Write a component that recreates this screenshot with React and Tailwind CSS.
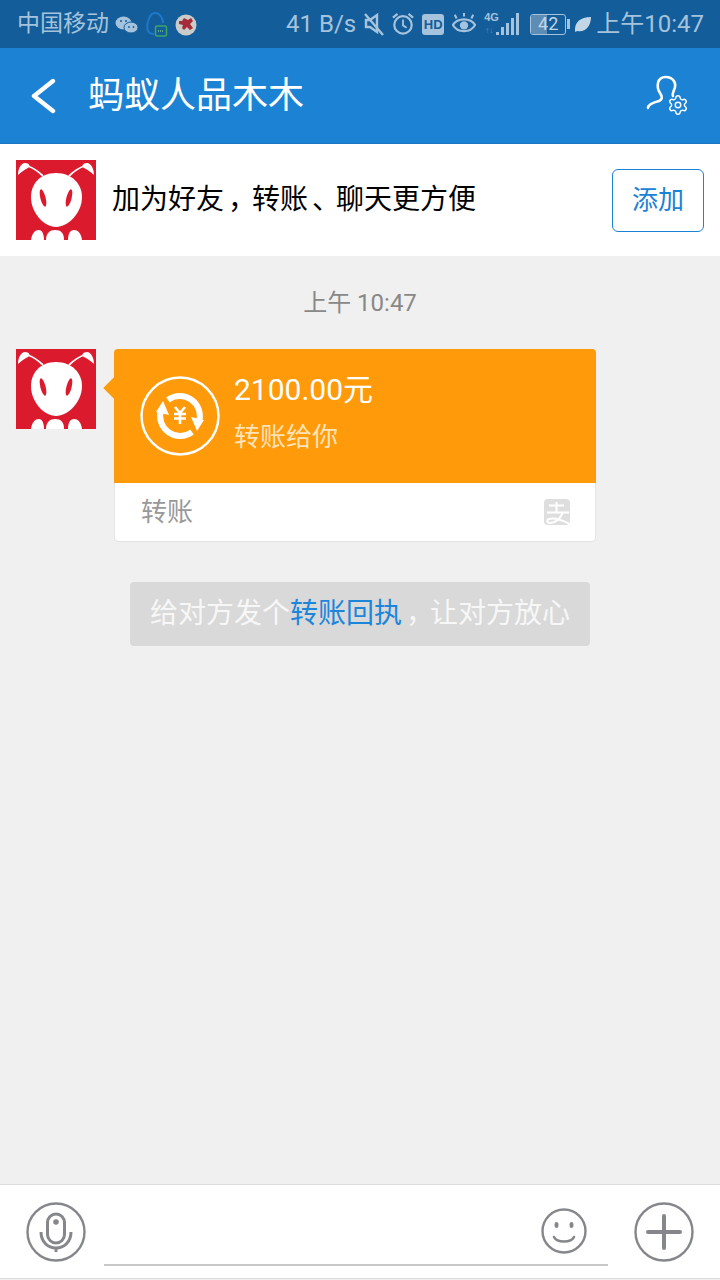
import { Settings } from "lucide-react";

const cjk = "font-['Roboto','Noto_Sans_CJK_SC',sans-serif]";

// the screenshot's font sets its punctuation a little further right in the em box
function Punct({ children }) {
    return <span className="inline-block ml-[4px] tracking-[-4px]">{children}</span>;
}

function AntAvatar() {
    return (
        <svg width="80" height="80" viewBox="0 0 80 80" className="shrink-0 block">
            <rect width="80" height="80" fill="#dc1a2e" />
            <path d="M27 16 C22 11 17 8 12 6" stroke="#fff" strokeWidth="1.8" fill="none" />
            <path d="M53 16 C58 11 63 8 68 6" stroke="#fff" strokeWidth="1.8" fill="none" />
            <path d="M2 15 C2 9 5 3 9 3 C13 3 15 6 12 8 C8 10 5 12 2 15 Z" fill="#fff" />
            <path d="M78 15 C78 9 75 3 71 3 C67 3 65 6 68 8 C72 10 75 12 78 15 Z" fill="#fff" />
            <path d="M40 13 C56 13 66 24 66 37 C66 53 52 67 40 67 C28 67 15 53 15 37 C15 24 24 13 40 13 Z" fill="#fff" />
            <ellipse cx="27" cy="38" rx="2.6" ry="9" fill="#dc1a2e" transform="rotate(-14 27 38)" />
            <ellipse cx="53" cy="38" rx="2.6" ry="9" fill="#dc1a2e" transform="rotate(14 53 38)" />
            <path d="M15 80 C16 73 19 70 23 70 C26 70 28 74 28 80 Z" fill="#fff" />
            <path d="M30 80 C30 73 34 70 39 70 C45 70 48 73 48 80 Z" fill="#fff" />
            <path d="M52 80 C52 74 54 70 58 70 C62 70 65 73 66 80 Z" fill="#fff" />
        </svg>
    );
}

function StatusLeftIcons() {
    return (
        <div className="flex items-center ml-[6px] mt-[1px]">
            {/* wechat */}
            <svg width="23" height="20" viewBox="0 0 23 20">
                <ellipse cx="8.5" cy="8" rx="8" ry="6.5" fill="#a5c3dc" />
                <ellipse cx="16" cy="12.5" rx="7" ry="5.5" fill="#a5c3dc" stroke="#135d9a" strokeWidth="1" />
                <circle cx="6" cy="6" r="1" fill="#135d9a" />
                <circle cx="11" cy="6" r="1" fill="#135d9a" />
                <circle cx="14" cy="12" r="0.9" fill="#135d9a" />
                <circle cx="18.5" cy="12" r="0.9" fill="#135d9a" />
            </svg>
            {/* qq message */}
            <svg width="22" height="28" viewBox="0 0 22 28" className="ml-[8px]">
                <path d="M2 20 C0 14 3 2 9 2 C15 2 17 9 17 12" stroke="#1e78c8" strokeWidth="2" fill="none" />
                <path d="M2 20 C3 22 5 23 8 23" stroke="#1e78c8" strokeWidth="2" fill="none" />
                <rect x="9.5" y="15" width="11" height="10" rx="1.5" fill="#135d9a" stroke="#3fa36a" strokeWidth="1.5" />
                <path d="M12 20h6" stroke="#6fc08e" strokeWidth="1.5" strokeDasharray="1 1" />
            </svg>
            {/* app badge */}
            <svg width="22" height="22" viewBox="0 0 22 22" className="ml-[7px]">
                <circle cx="11" cy="11" r="10.5" fill="#c9ccc8" />
                <path d="M4 7h3l2-3 4 2 3-2 2 3-3 3 3 4-3 2-3-3-3 3-2-2 1-3-4-1z" fill="#a52c3a" />
            </svg>
        </div>
    );
}

function StatusRightIcons() {
    const c = "#a5c3dc";
    return (
        <div className="flex items-center">
            {/* muted */}
            <svg width="20" height="26" viewBox="0 0 20 26" className="mr-[8px]">
                <path d="M2 9h4l7-5v17l-7-5H2z" fill="none" stroke={c} strokeWidth="2.4" />
                <path d="M1 3l18 21" stroke={c} strokeWidth="2.4" />
            </svg>
            {/* alarm */}
            <svg width="22" height="26" viewBox="0 0 24 26" className="mr-[8px]">
                <circle cx="12" cy="14" r="9.5" fill="none" stroke={c} strokeWidth="2.4" />
                <path d="M12 8v6.5l4 2.5" fill="none" stroke={c} strokeWidth="2" />
                <path d="M1 6l5-4M23 6l-5-4" stroke={c} strokeWidth="2.4" />
            </svg>
            {/* hd */}
            <div className="w-[22px] h-[21px] rounded-[3px] bg-[#a5c3dc] text-[#135d9a] text-[13px] font-bold leading-[21px] text-center font-['Liberation_Sans',sans-serif] mr-[8px]">HD</div>
            {/* eye */}
            <svg width="24" height="24" viewBox="0 0 26 24" className="mr-[8px]">
                <path d="M1 13 C6 5 20 5 25 13 C20 22 6 22 1 13 Z" fill="none" stroke={c} strokeWidth="2.4" />
                <circle cx="13" cy="13.5" r="4.5" fill={c} />
                <path d="M5 6L3 2M13 4V0M21 6l2-4" stroke={c} strokeWidth="2.2" />
            </svg>
            {/* signal */}
            <div className="relative w-[35px] h-[24px] mr-[11px]">
                <span className="absolute left-0 top-[-1px] text-[11px] leading-[12px] font-bold text-[#a5c3dc] font-['Liberation_Sans',sans-serif]">4G</span>
                <span className="absolute left-[1px] top-[14px] text-[8px] leading-[10px] font-bold text-[#5d8db5] font-['Liberation_Sans',sans-serif]">↑↓</span>
                <div className="absolute right-0 bottom-[1px] flex items-end gap-[2px]">
                    <div className="w-[3px] h-[3px] bg-[#a5c3dc]" />
                    <div className="w-[3px] h-[8px] bg-[#a5c3dc]" />
                    <div className="w-[3px] h-[12px] bg-[#a5c3dc]" />
                    <div className="w-[3px] h-[17px] bg-[#a5c3dc]" />
                    <div className="w-[3px] h-[22px] bg-[#a5c3dc]" />
                </div>
            </div>
            {/* battery */}
            <div className="relative w-[36px] h-[21px] rounded-[3px] border border-[#a5c3dc] flex items-center justify-center overflow-hidden">
                <div className="absolute left-0 top-0 bottom-0 w-[16px] bg-[#5d8db5]" />
                <span className="relative text-[18px] leading-[20px] text-[#c3d6e6] font-['Roboto',sans-serif]">42</span>
            </div>
            <div className="w-[3px] h-[10px] bg-[#a5c3dc] ml-[1px] mr-[4px]" />
            {/* leaf */}
            <svg width="17" height="17" viewBox="0 0 16 16" className="mr-[5px]">
                <path d="M1 15 C0 6 6 1 16 1 C16 10 10 16 3 14 Z" fill="#c3d6e6" />
            </svg>
        </div>
    );
}

function TransferIcon() {
    return (
        <svg width="80" height="80" viewBox="0 0 80 80">
            <circle cx="40" cy="40" r="38.5" fill="none" stroke="#fff" strokeWidth="2.5" />
            <path d="M28 24 A20 20 0 0 1 59 46" fill="none" stroke="#fff" strokeWidth="6" />
            <path d="M52 56 A20 20 0 0 1 21 34" fill="none" stroke="#fff" strokeWidth="6" />
            <path d="M51 41 L64 44 L57 55 Z" fill="#fff" />
            <path d="M29 39 L16 36 L23 25 Z" fill="#fff" />
            <path d="M35 31l5 6 5-6M34 38h12M34 42.5h12M40 37v11" fill="none" stroke="#fff" strokeWidth="2.6" />
        </svg>
    );
}

function AlipayIcon() {
    return (
        <svg width="26" height="26" viewBox="0 0 26 26">
            <path d="M4 0h18a4 4 0 0 1 4 4v18a4 4 0 0 1-4 4H4a4 4 0 0 1-4-4V4a4 4 0 0 1 4-4z" fill="#dedede" />
            <path d="M5 6.5h15M3 13.5h22M12.5 3v10.5M19 13.5C16 20 11 24 6 24 3 24 2 21 5 20 10 18 18 21 26 25" fill="none" stroke="#fff" strokeWidth="2" />
        </svg>
    );
}

export default function App() {
    return (
        <div className={`w-[720px] h-[1280px] flex flex-col bg-[#f0f0f0] overflow-hidden ${cjk}`}>
            {/* status bar */}
            <div className="h-[48px] bg-[#135d9a] flex items-center justify-between pl-[17px] pr-[16px] shrink-0 text-[#a5c3dc] text-[23px]">
                <div className="flex items-center">
                    <span>中国移动</span>
                    <StatusLeftIcons />
                </div>
                <div className="flex items-center">
                    <span className="mr-[8px] text-[24px]">41 B/s</span>
                    <StatusRightIcons />
                    <span className="text-[24px]">上午10:47</span>
                </div>
            </div>

            {/* title bar */}
            <div className="h-[96px] bg-[#1c82d4] border-b border-[#1a77c4] flex items-center shrink-0 pl-[29px] pr-[30px]">
                <svg width="28" height="36" viewBox="0 0 28 36">
                    <path d="M24 3 L5 18 L24 33" fill="none" stroke="#fff" strokeWidth="4.4" strokeLinecap="round" strokeLinejoin="round" />
                </svg>
                <div className="ml-[31px] text-white text-[36px] flex-1">蚂蚁人品木木</div>
                <div className="relative w-[46px] h-[48px] mr-[-1px] mt-[4px]">
                    <svg width="46" height="48" viewBox="0 0 46 48">
                        <path d="M3 34 C3 30 10 28 14 27 C18 25 17 22 15 19 C11 13 12 3 20.5 3 C29 3 32 10 29 16 C28 19 27 21 28 22" fill="none" stroke="#fff" strokeWidth="2.6" strokeLinecap="round" />
                    </svg>
                    <Settings size={22} strokeWidth={1.6} className="absolute left-[22px] top-[20px] text-white" />
                </div>
            </div>

            {/* add friend */}
            <div className="h-[112px] bg-white flex items-center shrink-0 pl-[16px] pr-[16px]">
                <AntAvatar />
                <div className="ml-[16px] text-[28px] text-black flex-1">加为好友<Punct>，</Punct>转账<Punct>、</Punct>聊天更方便</div>
                <div className="w-[92px] h-[63px] rounded-[6px] border border-[#1c82d4] text-[#1c82d4] text-[26px] flex items-center justify-center">添加</div>
            </div>

            {/* chat */}
            <div className="flex-1 flex flex-col">
                <div className="text-center text-[#888] text-[24px] leading-[32px] mt-[31px]">上午 10:47</div>
                <div className="flex pl-[16px] mt-[30px]">
                    <AntAvatar />
                    <div className="relative ml-[18px] w-[482px] h-[193px] rounded-[4px] bg-white border border-[#e4e4e4] flex flex-col overflow-visible">
                        <div className="absolute left-[-8px] top-[29px] w-[18px] h-[18px] rotate-45 bg-[#ff9a0a]" />
                        <div className="relative h-[134px] bg-[#ff9a0a] rounded-t-[4px] -mx-px -mt-px flex items-center pl-[26px]">
                            <TransferIcon />
                            <div className="ml-[14px] flex flex-col mt-[-8px]">
                                <div className="text-white text-[30px] leading-[42px] mb-[8px]">2100.00元</div>
                                <div className="text-[#ffe3b8] text-[26px] leading-[36px]">转账给你</div>
                            </div>
                        </div>
                        <div className="flex-1 flex items-center justify-between pl-[26px] pr-[25px] text-[#999] text-[26px]">
                            <span>转账</span>
                            <AlipayIcon />
                        </div>
                    </div>
                </div>
                <div className="self-center mt-[40px] w-[460px] h-[64px] rounded-[4px] bg-[#d9d9d9] text-[#f7f7f7] text-[28px] flex items-center justify-center">
                    <span>给对方发个<span className="text-[#1c86da]">转账回执</span><Punct>，</Punct>让对方放心</span>
                </div>
            </div>

            {/* input bar */}
            <div className="h-[94px] mb-[2px] bg-white border-t border-[#dcdcdc] shadow-[0_1px_0_#dcdcdc] flex items-center shrink-0 relative pl-[26px] pr-[26px]">
                <svg width="60" height="60" viewBox="0 0 60 60">
                    <circle cx="30" cy="30" r="28.5" fill="none" stroke="#85878b" strokeWidth="2.4" />
                    <rect x="21.5" y="12" width="17" height="29" rx="8.5" fill="none" stroke="#85878b" strokeWidth="3" />
                    <circle cx="30" cy="20" r="2.8" fill="#85878b" />
                    <path d="M15 30 C15 40 22 46 30 46 C38 46 45 40 45 30M30 46v4" fill="none" stroke="#85878b" strokeWidth="3" />
                </svg>
                <div className="ml-[18px] w-[504px] h-[81px] border-b-2 border-[#c8c8c8] flex items-center justify-end self-start pr-[21px]">
                    <svg width="46" height="46" viewBox="0 0 46 46" className="mt-[12px]">
                        <circle cx="23" cy="23" r="21.5" fill="none" stroke="#85878b" strokeWidth="2.4" />
                        <ellipse cx="15.5" cy="17" rx="2" ry="3" fill="#85878b" />
                        <ellipse cx="30.5" cy="17" rx="2" ry="3" fill="#85878b" />
                        <path d="M13 29 C16 35 30 35 33 29" fill="none" stroke="#85878b" strokeWidth="2.6" strokeLinecap="round" />
                    </svg>
                </div>
                <svg width="60" height="60" viewBox="0 0 60 60" className="ml-auto">
                    <circle cx="30" cy="30" r="28.5" fill="none" stroke="#85878b" strokeWidth="2.4" />
                    <path d="M14 30h32M30 14v32" stroke="#85878b" strokeWidth="4" strokeLinecap="round" />
                </svg>
            </div>
        </div>
    );
}
